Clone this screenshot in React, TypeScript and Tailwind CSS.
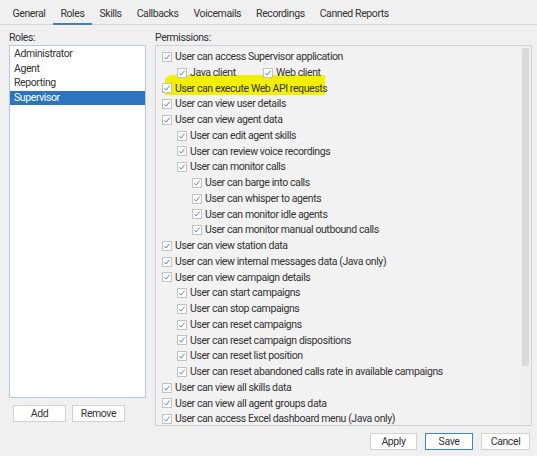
import clsx from 'clsx'

const TABS = ['General', 'Roles', 'Skills', 'Callbacks', 'Voicemails', 'Recordings', 'Canned Reports']
const ROLES = ['Administrator', 'Agent', 'Reporting', 'Supervisor']

type Perm = { label: string; level: number }

const PERMS: Perm[] = [
  { label: 'User can access Supervisor application', level: 0 },
  { label: '__clients__', level: 1 },
  { label: 'User can execute Web API requests', level: 0 },
  { label: 'User can view user details', level: 0 },
  { label: 'User can view agent data', level: 0 },
  { label: 'User can edit agent skills', level: 1 },
  { label: 'User can review voice recordings', level: 1 },
  { label: 'User can monitor calls', level: 1 },
  { label: 'User can barge into calls', level: 2 },
  { label: 'User can whisper to agents', level: 2 },
  { label: 'User can monitor idle agents', level: 2 },
  { label: 'User can monitor manual outbound calls', level: 2 },
  { label: 'User can view station data', level: 0 },
  { label: 'User can view internal messages data (Java only)', level: 0 },
  { label: 'User can view campaign details', level: 0 },
  { label: 'User can start campaigns', level: 1 },
  { label: 'User can stop campaigns', level: 1 },
  { label: 'User can reset campaigns', level: 1 },
  { label: 'User can reset campaign dispositions', level: 1 },
  { label: 'User can reset list position', level: 1 },
  { label: 'User can reset abandoned calls rate in available campaigns', level: 1 },
  { label: 'User can view all skills data', level: 0 },
  { label: 'User can view all agent groups data', level: 0 },
  { label: 'User can access Excel dashboard menu (Java only)', level: 0 },
]

const INDENT = ['pl-[6px]', 'pl-[21px]', 'pl-[36px]']

function Check() {
  return (
    <span className="mr-[3px] inline-flex h-[10px] w-[10px] shrink-0 items-center justify-center border border-[#c2c2c2] bg-white">
      <svg viewBox="0 0 10 10" className="h-[8px] w-[8px]">
        <path d="M1.8 5.2 L4 7.6 L8.2 2" fill="none" stroke="#3b86d4" strokeWidth="1.2" />
      </svg>
    </span>
  )
}

function Button({ label, focused }: { label: string; focused?: boolean }) {
  return (
    <button
      type="button"
      className={clsx(
        'flex h-[17px] w-full items-center justify-center border bg-white text-[#333]',
        focused ? 'border-[#3c86d0]' : 'border-[#d2d2d2]',
      )}
    >
      {label}
    </button>
  )
}

export default function App() {
  return (
    <div className="relative flex h-[456px] w-[537px] flex-col overflow-hidden bg-[#f0f0f0] font-['Roboto',sans-serif] text-[10.5px] tracking-[-0.4px] text-[#333]">
      {/* Tab strip */}
      <div className="flex h-[25px] shrink-0 border-b border-[#d6d6d6] pl-[5px]">
        {TABS.map((t) => (
          <div
            key={t}
            className={clsx(
              'relative flex items-center px-[7.5px] pt-[4px]',
              t === 'Roles' && 'after:absolute after:bottom-[-1px] after:left-0 after:right-0 after:h-[2px] after:bg-[#3f82c4]',
            )}
          >
            {t}
          </div>
        ))}
      </div>

      <div className="flex pl-[9px] pt-[6px]">
        {/* Roles */}
        <div className="flex w-[137px] flex-col">
          <div className="h-[14px] leading-[14px]">Roles:</div>
          <div className="h-[353px] border border-[#aeccea] bg-white pt-[1px]">
            {ROLES.map((r) => (
              <div
                key={r}
                className={clsx(
                  'flex h-[14.5px] items-center pl-[4px]',
                  r === 'Supervisor' && 'bg-[#2a74c0] text-white',
                )}
              >
                {r}
              </div>
            ))}
          </div>
          <div className="mt-[7px] flex gap-[6px] pl-[4px]">
            <div className="w-[53px]">
              <Button label="Add" />
            </div>
            <div className="w-[53px]">
              <Button label="Remove" />
            </div>
          </div>
        </div>

        {/* Permissions */}
        <div className="ml-[9px] flex w-[377px] flex-col">
          <div className="h-[14px] leading-[14px]">Permissions:</div>
          <div className="relative flex h-[381px] border border-[#d2d2d2] bg-[#f2f2f2]">
            <div className="flex-1 pt-[3px]">
              {PERMS.map((p, i) =>
                p.label === '__clients__' ? (
                  <div key={i} className="relative z-10 flex h-[15.75px] items-center pl-[21px]">
                    <Check />
                    <span className="w-[73px]">Java client</span>
                    <Check />
                    <span>Web client</span>
                  </div>
                ) : (
                  <div key={i} className={clsx('relative z-10 flex h-[15.75px] items-center', INDENT[p.level])}>
                    <Check />
                    <span>{p.label}</span>
                  </div>
                ),
              )}
            </div>
            {/* highlighter mark */}
            <div className="absolute left-[9px] top-[29px] h-[20px] w-[160px] bg-[#f4ee00] [clip-path:polygon(3%_0,100%_0,100%_100%,0_100%,0_20%)]" />
            {/* scrollbar */}
            <div className="mr-[1px] w-[9px] bg-[#efefef] pt-[2px]">
              <div className="mx-auto h-[318px] w-[7px] rounded-[2px] bg-[#dadada]" />
            </div>
          </div>
        </div>
      </div>

      {/* Footer buttons */}
      <div className="mt-[7px] flex justify-end gap-[8px] pr-[7px]">
        <div className="w-[47px]">
          <Button label="Apply" />
        </div>
        <div className="w-[48px]">
          <Button label="Save" focused />
        </div>
        <div className="w-[49px]">
          <Button label="Cancel" />
        </div>
      </div>
    </div>
  )
}
